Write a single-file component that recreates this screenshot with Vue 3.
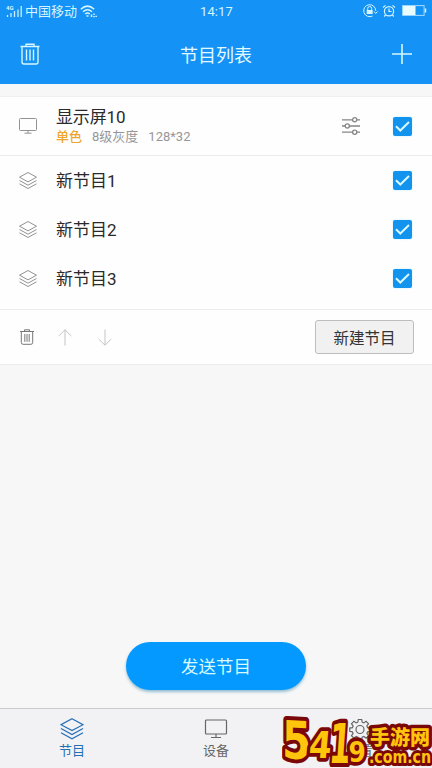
<script setup>
import { ref } from 'vue'

const programs = ref([
  { name: '新节目1', checked: true },
  { name: '新节目2', checked: true },
  { name: '新节目3', checked: true },
])
const logoDigits = [
  { t: '5', m: 'translate(282 758) skewY(3) scale(.84 1.05)', s: 50 },
  { t: '4', m: 'translate(308 758) skewX(-5) scale(.88 1)', s: 37 },
  { t: '1', m: 'translate(328 763) skewX(-4) scale(.64 1.1)', s: 50 },
  { t: '9', m: 'translate(348.5 762) scale(.86 1)', s: 29 },
]
</script>

<template>
  <main class="screen">
    <header class="top">
      <div class="status">
        <div class="carrier">
          <svg width="17" height="14" viewBox="0 0 17 14">
            <text x="0" y="6" font-size="6" font-weight="bold" fill="#d5f5ff">4G</text>
            <path d="M1.5 11v2M5 9v4M8.5 7v6M12 5.5V13M15.2 2v11" stroke="#c9efff" stroke-width="1.3" fill="none" />
          </svg>
          <span>中国移动</span>
          <svg class="wifi" width="18" height="13" viewBox="0 0 18 13" fill="none" stroke="#d5f5ff" stroke-width="1.5">
            <path d="M.8 4.3Q7.5-2 14.2 4.3M3 6.7q4.500-4 9 0M5.200 9q2.300-2 4.600 0" />
            <path d="M6.500 11h2M11.500 9.500v2.500M14 8.500v1.500M14 11v1.300M16.200 10.800v1.300" />
          </svg>
        </div>
        <span class="time">14:17</span>
        <div class="indicators">
          <svg width="15" height="14" viewBox="0 0 15 14" fill="none" stroke="#d5f5ff">
            <path d="M9.500 12A6 6 0 1 1 12.700 6.800M11 7.500l1.700 2 1.800-2" />
            <path d="M4.700 6V4.500a2 2 0 0 1 4 0V6" />
            <path d="M3.700 6h6v4h-6z" fill="#d5f5ff" stroke="none" />
          </svg>
          <svg width="14" height="14" viewBox="0 0 14 14" fill="none" stroke="#d5f5ff" stroke-width="1.2">
            <circle cx="7" cy="7.200" r="4.600" />
            <path d="M7 4.500v3h2.500M1 3.500 3.500 1.400M10.500 1.400 13 3.500M3.500 11 2.200 12.500M10.500 11l1.300 1.500" />
          </svg>
          <svg class="battery" width="25" height="12" viewBox="0 0 25 12">
            <rect x=".6" y=".6" width="21.500" height="9.800" fill="none" stroke="#a5dcff" />
            <path d="M1 1h12.500v9H1z" fill="#e8fbff" />
            <path d="M23.500 3.500v4" stroke="#d5f5ff" stroke-width="1.500" />
          </svg>
        </div>
      </div>
      <div class="titlebar">
        <svg width="20" height="22" viewBox="0 0 20 22" class="line light">
          <path d="M.5 3.500h19M6 3V1.200h8V3M2 4v15q0 2 2 2h12q2 0 2-2V4M6.500 6.500v11M10 6.500v11M13.500 6.500v11" />
        </svg>
        <h1>节目列表</h1>
        <svg width="20" height="20" viewBox="0 0 20 20" class="line light plus"><path d="M10 0v20M0 10h20" /></svg>
      </div>
    </header>

    <section class="list">
      <div class="device">
        <svg width="18" height="16" viewBox="0 0 18 16" class="line grey">
          <rect x=".5" y=".5" width="17" height="12" rx="1" /><path d="M9 12.500v2.500M5.500 15.200h7" />
        </svg>
        <div class="info">
          <div class="name">显示屏10</div>
          <div class="meta"><b>单色</b><span>8级灰度</span><span>128*32</span></div>
        </div>
        <svg width="18" height="18" viewBox="0 0 18 18" class="line sliders">
          <path d="M0 2.800h10.500M15 2.800h3M0 9h3M7.500 9H18M0 15.200h10.500M15 15.200h3" />
          <circle cx="12.700" cy="2.800" r="2.100" /><circle cx="5.300" cy="9" r="2.100" /><circle cx="12.700" cy="15.200" r="2.100" />
        </svg>
        <button class="check"><svg width="19" height="19" viewBox="0 0 19 19"><path d="m3 9.300 4.300 4.200 8.700-8.500" /></svg></button>
      </div>
      <div class="programs">
        <div v-for="p in programs" :key="p.name" class="program">
          <svg width="18" height="17" viewBox="0 0 18 17" class="line grey">
            <path d="M9 .5 17.500 5.200 9 9.900.5 5.200zM.5 8.500 9 13.200l8.500-4.700M.5 11.800 9 16.500l8.500-4.700" />
          </svg>
          <span class="name">{{ p.name }}</span>
          <button class="check" @click="p.checked = !p.checked">
            <svg v-if="p.checked" width="19" height="19" viewBox="0 0 19 19"><path d="m3 9.300 4.300 4.200 8.700-8.500" /></svg>
          </button>
        </div>
      </div>
      <div class="tools">
        <svg width="14" height="16" viewBox="0 0 14 16" class="line dark">
          <path d="M0 2.500h14M4.500 2V.8h5V2M1.300 3v10.500q0 1.800 1.800 1.800h7.800q1.800 0 1.800-1.800V3M4.800 5v7.800M7 5v7.800M9.200 5v7.800" />
        </svg>
        <svg width="14" height="17" viewBox="0 0 14 17" class="line pale up"><path d="M7 16.500V.8M.7 7 7 .8 13.300 7" /></svg>
        <svg width="14" height="17" viewBox="0 0 14 17" class="line pale down"><path d="M7 .5v15.700M.7 10 7 16.200 13.300 10" /></svg>
        <button class="create">新建节目</button>
      </div>
    </section>

    <section class="content"><button class="send">发送节目</button></section>

    <nav class="tabs">
      <div class="tab active">
        <svg width="24" height="22" viewBox="0 0 24 22" class="line">
          <path d="M12 .8 23 6.700 12 12.600 1 6.700zM1 10.500l11 6 11-6M1 14.800l11 6 11-6" />
        </svg>
        <span>节目</span>
      </div>
      <div class="tab">
        <svg width="24" height="22" viewBox="0 0 24 22" class="line">
          <rect x="1.500" y="2" width="21" height="14" rx="1" /><path d="M12 16v3.500M7 19.500h10" />
        </svg>
        <span>设备</span>
      </div>
      <div class="tab">
        <svg width="24" height="22" viewBox="0 0 24 22" class="line">
          <path d="m10.300 1.500h3.400l.5 2.700 1.600.7 2.300-1.600 2.400 2.400-1.600 2.300.7 1.600 2.700.5v3.200l-2.700.5-.7 1.600 1.600 2.300-2.400 2.400-2.300-1.600-1.600.7-.5 2.300h-3.400l-.5-2.300-1.600-.7-2.300 1.600-2.400-2.400 1.600-2.300-.7-1.600-2.700-.5v-3.200l2.700-.5.7-1.600-1.600-2.300 2.400-2.400 2.300 1.600 1.600-.7z" />
          <circle cx="12" cy="11.500" r="4" />
        </svg>
        <span>设置</span>
      </div>
    </nav>

    <svg class="logo" width="150" height="58" viewBox="282 710 150 58">
      <g class="digits">
        <text v-for="d in logoDigits" :key="d.t" :transform="d.m" :font-size="d.s">{{ d.t }}</text>
      </g>
      <text class="cn" x="370" y="745" textLength="60" lengthAdjust="spacingAndGlyphs">手游网</text>
      <text class="domain" x="369" y="762.5" textLength="62" lengthAdjust="spacingAndGlyphs">.com.cn</text>
    </svg>
  </main>
</template>

<style>
body { margin: 0; }
</style>

<style scoped>
* { box-sizing: border-box; }
.screen { position: relative; display: flex; flex-direction: column; height: 768px; overflow: hidden; background: #f7f7f8; font-family: Roboto, "Noto Sans CJK SC", sans-serif; color: #2a2a2a; }
button { padding: 0; border: 0; font-family: inherit; }
svg { display: block; flex: none; }
.line { fill: none; stroke: currentColor; stroke-width: 1; }
.light { color: #d5f7ff; stroke-width: 1.4; }
.plus { stroke-width: 1.6; }
.grey { color: #929294; }
.dark { color: #77777a; }
.pale { color: #c4c4c6; }
.top { height: 84px; flex: none; background: #1492f5; color: #d5f5ff; }
.status { display: grid; grid-template-columns: 1fr auto 1fr; align-items: center; height: 22px; padding: 0 5px 0 6px; font-size: 13px; }
.carrier, .indicators { display: flex; align-items: center; }
.carrier span { margin-left: 2px; padding-bottom: 2px; }
.wifi { margin-left: 3px; }
.time { letter-spacing: .1px; }
.indicators { justify-content: flex-end; gap: 4px; }
.battery { margin-left: 2px; }
.titlebar { display: grid; grid-template-columns: 20px 1fr 20px; align-items: center; height: 64px; padding: 0 20px; }
h1 { margin: 0; text-align: center; font-size: 18px; font-weight: 400; color: #e2faff; }
.list { flex: none; margin-top: 12px; border-top: 1px solid #efeff0; border-bottom: 1px solid #ebebed; background: #fefefe; }
.device { display: flex; align-items: center; height: 59px; padding: 0 20px 0 19px; border-bottom: 1px solid #ececee; }
.info { flex: 1; margin-left: 19px; }
.name { font-size: 17px; line-height: 21px; }
.device .name { letter-spacing: -.15px; }
.meta { display: flex; gap: 10px; font-size: 13px; line-height: 17px; color: #969698; }
.meta b { font-weight: 500; color: #efa62c; }
.sliders { color: #858588; stroke-width: 1.3; margin-right: 33px; }
.check { width: 19px; height: 19px; border-radius: 2px; background: #1293ee; box-shadow: 0 0 2px #b5edff; }
.check path { fill: none; stroke: #d9f8ff; stroke-width: 2; }
.programs { height: 154px; border-bottom: 1px solid #ececee; }
.program { display: flex; align-items: center; height: 49px; padding: 0 20px 0 19px; }
.program .name { flex: 1; margin-left: 19px; padding-top: 2px; }
.tools { display: flex; align-items: center; height: 54px; padding: 0 18px 0 20px; }
.up { margin-left: 24px; }
.down { margin-left: 26px; }
.create { width: 99px; height: 34px; margin-left: auto; padding-bottom: 1px; border: 1px solid #bdbdbf; border-radius: 3px; background: #f2f1f2; color: #333; font-size: 15.5px; }
.content { flex: 1; display: flex; align-items: flex-end; justify-content: center; padding-bottom: 18px; }
.send { width: 180px; height: 48px; padding-bottom: 2px; border-radius: 24px; background: #0499ff; color: #d8faff; font-size: 17.5px; box-shadow: 0 2px 3px #95bfd2; }
.tabs { display: flex; height: 60px; flex: none; border-top: 1px solid #cacacc; background: #f2f1f3; }
.tab { flex: 1; display: flex; flex-direction: column; align-items: center; padding-top: 9px; color: #666; font-size: 13px; line-height: 22px; }
.tab .line { stroke-width: 1.2; }
.active { color: #246fb5; }
.logo { position: absolute; right: 0; bottom: 0; }
.logo text { fill: #ffc40c; stroke: #7b0808; stroke-linejoin: round; paint-order: stroke; font-weight: 900; }
.logo .digits text { font-family: "DejaVu Sans", sans-serif; stroke-width: 7.5px; }
.logo .cn { font-family: "Noto Sans CJK SC", sans-serif; font-size: 20px; stroke-width: 7px; }
.logo .domain { font-family: "DejaVu Sans", sans-serif; font-size: 17px; stroke-width: 6px; }
</style>
